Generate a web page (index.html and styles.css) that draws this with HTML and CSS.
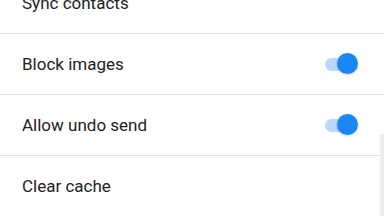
FILE: index.html
```html
<!DOCTYPE html>
<html lang="en">
<head>
    <meta charset="UTF-8">
    <meta name="viewport" content="width=device-width, initial-scale=1.0">
    <title>Settings</title>
    <link rel="stylesheet" href="styles.css">
</head>
<body>

    <!-- Settings list -->
    <div class="settings-list">
        <div class="setting-row">
            <span class="setting-label">Sync contacts</span>
        </div>
        <div class="setting-row">
            <span class="setting-label">Block images</span>
            <div class="toggle on"><div class="toggle-thumb"></div></div>
        </div>
        <div class="setting-row">
            <span class="setting-label">Allow undo send</span>
            <div class="toggle on"><div class="toggle-thumb"></div></div>
        </div>
        <div class="setting-row last">
            <span class="setting-label">Clear cache</span>
        </div>
    </div>
    <div class="scrollbar"></div>

</body>
</html>
```

FILE: styles.css
```css
body {
    font-family: Roboto, "Noto Sans", sans-serif;
    background-color: #fff;
    margin: 0;
    width: 384px;
    height: 216px;
    overflow: hidden;
    position: relative;
}
.settings-list {
    margin-top: -27px;
}
.setting-row {
    height: 60px;
    border-bottom: 1px solid #e4e4e4;
    display: flex;
    align-items: center;
    justify-content: space-between;
    padding: 0 26px 0 22px;
}
.setting-row.last {
    border-bottom: none;
}
.setting-label {
    font-size: 17px;
    color: #222;
}
.toggle {
    width: 33px;
    height: 22px;
    position: relative;
    display: flex;
    align-items: center;
}
.toggle::before {
    content: "";
    display: block;
    width: 26px;
    height: 13px;
    border-radius: 7px;
    background-color: #bcd9fb;
}
.toggle-thumb {
    position: absolute;
    right: 0;
    top: 0;
    width: 21px;
    height: 21px;
    border-radius: 50%;
    background-color: #1a87f4;
    box-shadow: 0 1px 3px rgba(0, 0, 0, 0.2);
}
.scrollbar {
    position: absolute;
    right: 0;
    top: 134px;
    width: 4px;
    height: 82px;
    background-color: #ececec;
}
```
